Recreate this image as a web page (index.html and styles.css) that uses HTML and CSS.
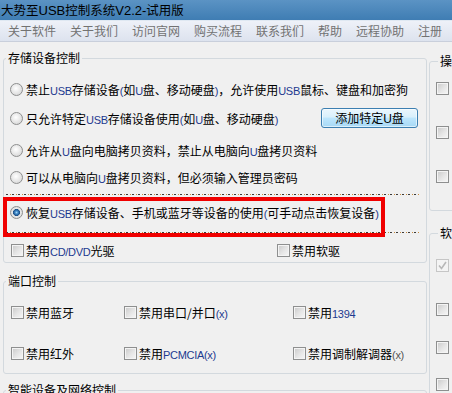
FILE: index.html
```html
<!DOCTYPE html>
<html lang="zh-CN">
<head>
<meta charset="utf-8">
<title>大势至USB控制系统</title>
<link rel="stylesheet" href="styles.css">
</head>
<body>
<div class="titlebar"><span class="title">大势至<span class="ten">USB</span>控制系统<span class="ten">V2.2-</span>试用版</span></div>
<div class="menubar">
  <span class="mi">关于软件</span><span class="mi">关于我们</span><span class="mi">访问官网</span><span class="mi">购买流程</span><span class="mi">联系我们</span><span class="mi">帮助</span><span class="mi">远程协助</span><span class="mi">注册</span>
</div>
<div class="main">
  <div class="leftcol">
    <fieldset class="grp g1">
      <legend>存储设备控制</legend>
      <div class="row r1"><span class="radio"></span><span class="lbl">禁止<span class="en">USB</span>存储设备<span class="en">(</span>如<span class="en">U</span>盘、移动硬盘<span class="en">)</span>，允许使用<span class="en">USB</span>鼠标、键盘和加密狗</span></div>
      <div class="row r2"><span class="radio"></span><span class="lbl">只允许特定<span class="en">USB</span>存储设备使用<span class="en">(</span>如<span class="en">U</span>盘、移动硬盘<span class="en">)</span></span><button class="btn">添加特定<span class="en">U</span>盘</button></div>
      <div class="row r3"><span class="radio"></span><span class="lbl">允许从<span class="en">U</span>盘向电脑拷贝资料，禁止从电脑向<span class="en">U</span>盘拷贝资料</span></div>
      <div class="row r4"><span class="radio"></span><span class="lbl">可以从电脑向<span class="en">U</span>盘拷贝资料，但必须输入管理员密码</span></div>
      <div class="restore">
        <div class="row rr"><span class="radio on"></span><span class="lbl">恢复<span class="en">USB</span>存储设备、手机或蓝牙等设备的使用<span class="en">(</span>可手动点击恢复设备<span class="en">)</span></span></div>
        <div class="mark"></div>
      </div>
      <div class="cbrow c1">
        <div class="ck"><span class="cb"></span><span class="lbl">禁用<span class="en">CD/DVD</span>光驱</span></div>
        <div class="ck"><span class="cb"></span><span class="lbl">禁用软驱</span></div>
      </div>
    </fieldset>
    <fieldset class="grp g2">
      <legend>端口控制</legend>
      <div class="portgrid">
        <div class="ck"><span class="cb"></span><span class="lbl">禁用蓝牙</span></div>
        <div class="ck"><span class="cb"></span><span class="lbl">禁用串口/并口<span class="en">(x)</span></span></div>
        <div class="ck"><span class="cb"></span><span class="lbl">禁用<span class="en">1394</span></span></div>
        <div class="ck"><span class="cb"></span><span class="lbl">禁用红外</span></div>
        <div class="ck"><span class="cb"></span><span class="lbl">禁用<span class="en">PCMCIA(x)</span></span></div>
        <div class="ck"><span class="cb"></span><span class="lbl">禁用调制解调器<span class="en gray">(x)</span></span></div>
      </div>
    </fieldset>
    <fieldset class="grp g3">
      <legend>智能设备及网络控制</legend>
      <div class="spacer"></div>
    </fieldset>
  </div>
  <div class="rightcol">
    <fieldset class="grp ops">
      <legend>操作</legend>
      <div class="rck"><span class="cb"></span></div>
      <div class="rck"><span class="cb"></span></div>
      <div class="rck"><span class="cb"></span></div>
    </fieldset>
    <fieldset class="grp soft">
      <legend>软件</legend>
      <div class="rck s1"><span class="cb dis"><svg width="11" height="11" viewBox="0 0 11 11"><polyline points="2,5.5 4.5,8.5 9,2" fill="none" stroke="#b8b8b8" stroke-width="1.6"/></svg></span></div>
      <div class="rck s2"><span class="cb"></span></div>
      <div class="rck s3"><span class="cb"></span></div>
      <div class="rck s4"><span class="cb"></span></div>
    </fieldset>
  </div>
</div>
</body>
</html>
```
FILE: styles.css
```css
html, body {
  margin: 0;
  padding: 0;
  width: 452px;
  height: 393px;
  overflow: hidden;
  background: #f0f0f0;
  font-family: "Noto Sans CJK SC", "Noto Sans", sans-serif;
  font-size: 12px;
  color: #000;
}

.titlebar {
  height: 20px;
  background: linear-gradient(#5b93c4, #3f7db3);
  border-bottom: 1px solid #dfe8f2;
  display: flex;
  align-items: center;
  padding-left: 1px;
}
.title {
  font-size: 12.5px;
  line-height: 20px;
  color: #000;
}
.ten {
  font-family: "Liberation Sans", sans-serif;
  font-size: 13px;
}

.menubar {
  height: 20px;
  background: linear-gradient(#eef1f8, #dde3ee);
  border-bottom: 1px solid #c9cfdb;
  display: flex;
  align-items: center;
  padding-left: 1px;
  white-space: nowrap;
}
.mi {
  padding: 0 7px;
  color: #727272;
  font-size: 12px;
  line-height: 20px;
}

.main {
  display: flex;
  overflow: hidden;
  width: 452px;
  height: 351px;
}
.leftcol {
  flex: none;
  width: 424px;
  margin-left: 3px;
}
.rightcol {
  flex: none;
  width: 120px;
  margin-left: 2px;
}

.grp {
  margin: 0;
  padding: 0;
  min-width: 0;
  border: 1px solid #d3d9de;
  border-radius: 3px;
  box-sizing: border-box;
}
.grp legend {
  margin-left: 2px;
  padding: 0 2px;
  font-size: 12px;
  line-height: 16px;
  white-space: nowrap;
}

.row {
  display: flex;
  align-items: center;
  padding-left: 6px;
  white-space: nowrap;
}
.lbl {
  margin-left: 3px;
  white-space: nowrap;
}
.en {
  font-family: "Liberation Sans", sans-serif;
  font-size: 11px;
  color: #1d3a8f;
  letter-spacing: -0.3px;
}
.en.gray {
  color: #555;
}

.g1 {
  margin-top: 8px;
  padding-top: 9px;
  padding-bottom: 2px;
}
.r1 { height: 28px; }
.r2 { height: 30px; }
.r3 { height: 34px; }
.r4 { height: 20px; }

.btn {
  margin-left: auto;
  margin-right: 8px;
  width: 97px;
  height: 20px;
  padding: 0;
  border: 1px solid #3c7fb1;
  border-radius: 3px;
  background: linear-gradient(#eaf6fd 0%, #d9f0fc 45%, #bee6fd 50%, #a7d9f5 100%);
  box-shadow: inset 0 0 0 1px rgba(255, 255, 255, 0.6);
  font-family: "Noto Sans CJK SC", sans-serif;
  font-size: 12px;
  color: #000;
  line-height: 18px;
}
.btn .en { color: #000; font-size: 12px; }

.radio {
  flex: none;
  width: 13px;
  height: 13px;
  box-sizing: border-box;
  border-radius: 50%;
  border: 1px solid #8e8f8f;
  background: radial-gradient(circle at 45% 40%, #ffffff 0, #ececec 40%, #cfcfcf 100%);
}
.radio.on {
  background: radial-gradient(circle at 50% 50%, #9fd6f7 0, #3b84c4 1.6px, #1d4f86 3.2px, #e9e9e9 3.8px, #d2d2d2 100%);
}

.restore {
  position: relative;
  margin: 7px 0 0 2px;
  width: 413px;
  height: 39px;
  box-sizing: border-box;
  background:
    repeating-linear-gradient(90deg, #3a3a3a 0 2px, transparent 2px 4px, #c88a3c 4px 5px, transparent 5px 6px) top left / 100% 1px no-repeat,
    repeating-linear-gradient(90deg, #3a3a3a 0 2px, transparent 2px 4px, #c88a3c 4px 5px, transparent 5px 6px) bottom left / 100% 1px no-repeat;
  padding-top: 8px;
}
.rr {
  height: 20px;
  padding-left: 4px;
}
.mark {
  position: absolute;
  left: -3px;
  top: 3px;
  width: 382px;
  height: 40px;
  box-sizing: border-box;
  border: 4px solid #f00000;
}

.cb {
  flex: none;
  width: 13px;
  height: 13px;
  box-sizing: border-box;
  border: 1px solid #8e8f8f;
  background: linear-gradient(135deg, #c9c9c9 0%, #e6e6e6 55%, #f7f7f7 100%);
  box-shadow: inset 0 0 0 1px #f4f4f4;
  display: flex;
  align-items: center;
  justify-content: center;
}
.cb.dis {
  border-color: #c6c6c6;
  background: #f4f4f4;
  box-shadow: none;
}
.cb svg { display: block; }

.ck {
  display: flex;
  align-items: center;
  height: 20px;
  white-space: nowrap;
}
.ck .lbl { margin-left: 2px; }

.cbrow {
  display: grid;
  grid-template-columns: 266px auto;
  margin-top: 7px;
  padding-left: 7px;
}

.g2 {
  margin-top: 10px;
  padding-top: 13px;
  padding-bottom: 10px;
}
.portgrid {
  display: grid;
  grid-template-columns: 113px 169px auto;
  row-gap: 21px;
  padding-left: 7px;
}

.g3 {
  margin-top: 8px;
}
.spacer { height: 40px; }

.ops {
  margin-top: 11px;
  padding: 9px 0 24px 6px;
}
.rck {
  display: flex;
  align-items: center;
  height: 20px;
}
.ops .rck + .rck { margin-top: 24px; }

.soft {
  margin-top: 14px;
  padding: 14px 0 10px 6px;
}
.s2 { margin-top: 24px; }
.s3 { margin-top: 18px; }
.s4 { margin-top: 17px; }
```
